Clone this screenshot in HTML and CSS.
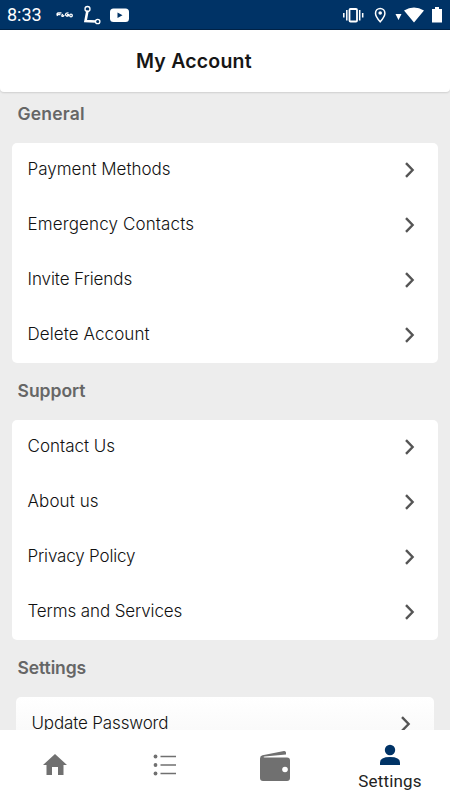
FILE: index.html
```html
<!DOCTYPE html>
<html lang="en">
<head>
<meta charset="utf-8">
<title>My Account</title>
<link rel="stylesheet" href="styles.css">
</head>
<body>
<svg class="defs" width="0" height="0"><symbol id="chev" viewBox="0 0 12 16"><path d="M2 1.2 8.600 8 2 14.800" fill="none" stroke="#555" stroke-width="2.400"/></symbol></svg>
<div class="screen">
  <div class="status">
    <span class="clock">8:33</span>
    <svg class="status-left" width="80" height="30" viewBox="0 0 80 30">
      <g fill="none" stroke="#fff" stroke-width="1.3">
        <path d="M6.500 12.800H3Q1.300 13.500 2.500 16M2.500 14.500h3M8 14.500q-1.500.3-1 1.800 1.500.7 2-1.500M13.500 12.800q-3-.2-3 2 .8 2 3 .8v-1h-1.500"/>
        <ellipse cx="16" cy="15.500" rx="1.300" ry="1.300"/>
        <path d="M32.500 10.500 30.500 21 41 21.500" stroke-width="2.600"/>
        <circle cx="32.500" cy="9" r="2.500"/><circle cx="42.700" cy="21.500" r="2.200"/>
      </g>
      <rect x="55" y="8.500" width="19" height="13.500" rx="3.500" fill="#fff"/>
      <path d="m62.500 12.500 5 2.800-5 2.700z" fill="#003366"/>
    </svg>
    <svg class="status-right" width="110" height="30" viewBox="0 0 110 30">
      <g fill="none" stroke="#fff">
        <rect x="9.500" y="9" width="7.500" height="12.500" rx="1" stroke-width="1.800"/>
        <path d="M6.800 10v10.500M19.700 10v10.500M3.800 13v4.500M22.700 13v4.500" stroke-width="1.500"/>
        <path d="M40.200 21.800Q35.500 16.500 35.500 13.200a4.700 4.700 0 0 1 9.400 0q0 3.300-4.700 8.600z" stroke-width="1.500"/>
      </g>
      <g fill="#fff"><circle cx="40.200" cy="13" r="1.800"/>
      <path d="M55.500 14h6L58.500 20zM64 10.500Q74 4.500 84 10.500L74 22.500zM92 9h3V7h4v2h3v13.500H92z"/></g>
    </svg>
  </div>
  <header class="header"><h1 class="title">My Account</h1></header>
  <main class="content">
    <h2 class="section general">General</h2>
    <div class="card">
      <div class="row"><span class="payment">Payment Methods</span><svg class="chev"><use href="#chev"/></svg></div>
      <div class="row"><span class="emergency">Emergency Contacts</span><svg class="chev"><use href="#chev"/></svg></div>
      <div class="row"><span class="invite">Invite Friends</span><svg class="chev"><use href="#chev"/></svg></div>
      <div class="row"><span class="delete">Delete Account</span><svg class="chev"><use href="#chev"/></svg></div>
    </div>
    <h2 class="section support">Support</h2>
    <div class="card">
      <div class="row"><span class="contact">Contact Us</span><svg class="chev"><use href="#chev"/></svg></div>
      <div class="row"><span class="about">About us</span><svg class="chev"><use href="#chev"/></svg></div>
      <div class="row"><span class="privacy">Privacy Policy</span><svg class="chev"><use href="#chev"/></svg></div>
      <div class="row"><span class="terms">Terms and Services</span><svg class="chev"><use href="#chev"/></svg></div>
    </div>
    <h2 class="section prefs">Settings</h2>
    <div class="card inset">
      <div class="row"><span class="password">Update Password</span><svg class="chev"><use href="#chev"/></svg></div>
    </div>
  </main>
  <nav class="nav">
    <div class="tab"><svg width="26" height="24" viewBox="0 0 26 24"><path d="M13 1 25 12h-3.500v10H16v-8h-6v8H4.500V12H1z" fill="#707070"/></svg></div>
    <div class="tab"><svg width="26" height="24" viewBox="0 0 26 24"><g fill="#707070"><circle cx="3.500" cy="3.500" r="1.900"/><circle cx="3.500" cy="12" r="1.900"/><circle cx="3.500" cy="20.500" r="1.900"/></g><path d="M8.500 3.500H24M8.500 12H24M8.500 20.500H24" stroke="#707070" stroke-width="1.500"/></svg></div>
    <div class="tab"><svg width="32" height="32" viewBox="0 0 32 32"><path d="M3.500 5.200 25 1Q26.800.800 27 2.500V4.500L5.500 6.400Q3.500 7.200 5.500 7.500H28q3 0 3 3V28q0 3-3 3H4q-3 0-3-3V8.500Q1 5.700 3.500 5.200z" fill="#707070"/><circle cx="26" cy="19.500" r="2.800" fill="#fff"/></svg></div>
    <div class="tab active"><svg width="22" height="22" viewBox="0 0 22 22"><circle cx="11" cy="6" r="5.200" fill="#003366"/><path d="M1 21v-2.500Q1 13 11 13t10 5.500V21z" fill="#003366"/></svg><span class="tab-label">Settings</span></div>
  </nav>
</div>
</body>
</html>
```

FILE: styles.css
```css
* { box-sizing: border-box; }
body { margin: 0; font-family: Inter, sans-serif; }
.defs { position: absolute; }
.screen { width: 450px; height: 800px; overflow: hidden; display: flex; flex-direction: column; background: #ededed; }
.status { height: 30px; flex: none; display: flex; align-items: center; background: #003366; border-bottom: 1px solid #002347; color: #fff; }
.clock { width: 55px; padding-left: 7px; font: 400 18px/30px Roboto, sans-serif; white-space: nowrap; }
.status-right { margin-left: auto; }
.header { height: 62px; flex: none; background: #fff; border-radius: 0 0 4px 4px; box-shadow: 0 1px 2px rgba(0,0,0,.13); padding-left: 136px; }
.title { margin: 0; font-size: 19.5px; line-height: 62px; font-weight: 600; letter-spacing: .2px; color: #161616; white-space: nowrap; }
.content { flex: 1; min-height: 0; overflow: hidden; padding: 0 12.5px 0 12px; }
.section { margin: 0; padding: 17px 0 0 5.5px; height: 57px; font-size: 17.5px; line-height: 22px; font-weight: 600; color: #666; }
.general { height: 50.5px; padding-top: 11px; letter-spacing: .2px; }
.prefs { letter-spacing: -.1px; }
.card { background: #fff; border-radius: 5px; }
.inset { margin: 0 4px; background: linear-gradient(#fff, #f8f8f8 45px); }
.row { height: 55px; display: flex; align-items: center; justify-content: space-between; padding: 0 21.5px 2px 15.5px; font-size: 17px; font-weight: 300; color: #111; white-space: nowrap; }
.emergency { letter-spacing: .13px; }
.invite { letter-spacing: -.08px; }
.delete { letter-spacing: .08px; }
.about { letter-spacing: .1px; }
.privacy { letter-spacing: -.17px; }
.terms { letter-spacing: -.12px; }
.password { letter-spacing: -.15px; }
.chev { width: 12px; height: 16px; position: relative; top: 1px; }
.nav { height: 70px; flex: none; display: flex; background: #fff; }
.tab { width: 110px; display: flex; align-items: center; justify-content: center; }
.tab:nth-child(3) { padding-top: 1px; }
.active { width: 120px; flex-direction: column; justify-content: flex-start; padding-top: 14px; }
.tab-label { font: 400 17px/20px Roboto, sans-serif; color: #222; margin-top: 5px; letter-spacing: .2px; }
```
